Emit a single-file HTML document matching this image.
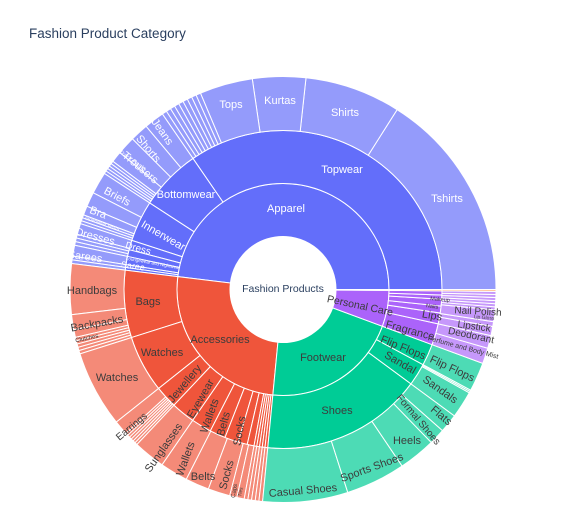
<!DOCTYPE html>
<html><head><meta charset="utf-8"><style>
html,body{margin:0;padding:0;background:#fff;width:564px;height:516px;overflow:hidden}
svg{display:block}
text{font-family:"Liberation Sans",sans-serif}
</style></head><body>
<svg id="s" width="564" height="516" xmlns="http://www.w3.org/2000/svg">
<text x="29" y="38" font-size="13.5" fill="#2a3f5f">Fashion Product Category</text>
</svg>
<script>
var cx=283,cy=289.5,R=[53,106,159,213];
var S=document.getElementById('s'),NS='http://www.w3.org/2000/svg';
function P(r,a){a=a*Math.PI/180;return [cx+r*Math.cos(a),cy-r*Math.sin(a)];}
function arc(l,a0,a1,col){
 var r0=R[l-1],r1=R[l];var p1=P(r1,a0),p2=P(r1,a1),p3=P(r0,a1),p4=P(r0,a0);
 var lg=(a1-a0)>180?1:0;
 var d='M'+p1+' A'+r1+' '+r1+' 0 '+lg+' 0 '+p2+' L'+p3+' A'+r0+' '+r0+' 0 '+lg+' 1 '+p4+'Z';
 var e=document.createElementNS(NS,'path');e.setAttribute('d',d);e.setAttribute('fill',col);
 e.setAttribute('stroke','#fff');e.setAttribute('stroke-width','1');S.appendChild(e);}
function many(l,a0,a1,n,col){var s=(a1-a0)/n;for(var i=0;i<n;i++)arc(l,a0+i*s,a0+(i+1)*s,col);}
var B1='#636efa',B2='#949bfb',R1='#ef553b',R2='#f48a78',G1='#00cc96',G2='#4ddbb5',P1='#ab63fa',P2='#c698fb',O1='#ffa15a',O2='#ffbd8c';
// level1
arc(1,0,173,B1);arc(1,173,264.5,R1);arc(1,264.5,339.7,G1);arc(1,339.7,359.5,P1);arc(1,359.5,360,O1);
// level2
arc(2,0,124.5,B1);arc(2,124.5,147,B1);arc(2,147,162,B1);arc(2,162,165.5,B1);arc(2,165.5,168,B1);arc(2,168,171,B1);many(2,171,173,2,B1);
arc(2,173,197.6,R1);arc(2,197.6,218.5,R1);arc(2,218.5,226.7,R1);arc(2,226.7,235.4,R1);arc(2,235.4,242.8,R1);arc(2,242.8,248.6,R1);arc(2,248.6,253.6,R1);arc(2,253.6,257,R1);arc(2,257,259.5,R1);many(2,259.5,264.5,5,R1);
arc(2,264.5,323.6,G1);arc(2,323.6,331.8,G1);arc(2,331.8,339.7,G1);
arc(2,339.7,347.5,P1);arc(2,347.5,351.5,P1);arc(2,351.5,354,P1);arc(2,354,356.5,P1);many(2,356.5,359.5,2,P1);arc(2,359.5,360,O1);
// level3
arc(3,0,57.6,B2);arc(3,57.6,83.8,B2);arc(3,83.8,98.3,B2);arc(3,98.3,112.8,B2);many(3,112.8,124.5,9,B2);
arc(3,124.5,130,B2);arc(3,130,135,B2);arc(3,135,140,B2);arc(3,140,143,B2);many(3,143,147,5,B2);
arc(3,147,153,B2);arc(3,153,157,B2);arc(3,157,159.5,B2);many(3,159.5,162,3,B2);
arc(3,162,165,B2);many(3,165,168,3,B2);arc(3,168,171,B2);many(3,171,173,2,B2);
arc(3,173,186.8,R2);arc(3,186.8,190.9,R2);arc(3,190.9,193,R2);many(3,193,197.6,5,R2);
arc(3,197.6,218.5,R2);arc(3,218.5,222.5,R2);many(3,222.5,226.7,6,R2);
arc(3,226.7,235.4,R2);arc(3,235.4,243,R2);arc(3,243,249.5,R2);arc(3,249.5,255.5,R2);arc(3,255.5,257.5,R2);arc(3,257.5,259.5,R2);many(3,259.5,264.5,5,R2);
arc(3,264.5,287.7,G2);arc(3,287.7,304,G2);arc(3,304,314.1,G2);arc(3,314.1,318.5,G2);arc(3,318.5,323.6,G2);arc(3,323.6,331,G2);many(3,331,331.8,2,G2);arc(3,331.8,339.7,G2);
arc(3,339.7,344,P2);arc(3,344,347.5,P2);arc(3,347.5,350,P2);arc(3,350,351.3,P2);arc(3,351.3,354.5,P2);many(3,354.5,359.5,6,P2);arc(3,359.5,360,O2);
// labels
var W='#fff',D='#3c3c3c';
var L=[
['Fashion Products',283,289,0,10.5,'#2a3f5f'],
['Apparel',286,209,0,11,W],['Topwear',342,170,0,11,W],['Tshirts',447,199,0,11,W],['Shirts',345,113,0,11,W],['Kurtas',280,101,0,11,W],['Tops',231,105,0,11,W],
['Bottomwear',186,195,0,11,W],['Innerwear',163,236,30,11,W],['Dress',138,249,15,10,W],['Loungewear and Nightwear',153,263,10,4.5,W],['Saree',133,266,8,9,W],
['Jeans',162,132,55,11,W],['Shorts',148,149,50,11,W],['Trousers',140,168,40,11,W],['Track Pants',132,161,35,6,W],
['Briefs',117,197,28,11,W],['Bra',98,213,20,11,W],['Innerwear Vests',102,224,18,5,W],['Dresses',95,237,15,11,W],['Sarees',85,257,8,11,W],
['Handbags',92,291,0,11,D],['Backpacks',97,324,-10,11,D],['Clutches',87,339,-12,6,D],['Bags',148,302,0,11,D],['Accessories',220,340,0,11,D],
['Watches',162,353,0,11,D],['Watches',117,378,0,11,D],['Jewellery',185,384,-50,11,D],['Eyewear',201,399,-60,11,D],['Wallets',210,416,-70,11,D],
['Belts',224,424,-75,11,D],['Socks',240,431,-80,11,D],['Earrings',132,427,-40,10,D],['Sunglasses',164,448,-55,11,D],['Wallets',186,459,-70,11,D],
['Belts',203,477,0,11,D],['Socks',227,475,-75,11,D],['Caps',235,491,-80,6,D],['Ties',241,492,-80,5,D],
['Footwear',323,358,0,11,D],['Shoes',337,411,0,11,D],['Casual Shoes',303,491,-5,11,D],['Sports Shoes',372,468,-20,11,D],['Heels',407,441,0,11,D],
['Formal Shoes',418,420,50,10,D],['Flats',441,416,40,11,D],['Sandals',440,390,35,11,D],['Flip Flops',452,369,25,11,D],['Sandal',400,363,30,11,D],['Flip Flops',403,348,22,11,D],
['Personal Care',360,306,12,10.5,D],['Fragrance',410,331,15,11,D],['Lips',432,316,10,11,D],['Nails',432,307,8,5.5,D],['Makeup',440,300,5,5.5,D],
['Perfume and Body Mist',463,348,15,7,D],['Deodorant',471,336,12,10,D],['Lipstick',474,327,8,10,D],['Lip Gloss',484,318,5,5,D],['Nail Polish',478,312,3,10,D]
];
L.forEach(function(t){var e=document.createElementNS(NS,'text');e.textContent=t[0];
e.setAttribute('x',0);e.setAttribute('y',0);e.setAttribute('font-size',t[4]);e.setAttribute('fill',t[5]);
e.setAttribute('text-anchor','middle');e.setAttribute('dominant-baseline','central');
e.setAttribute('transform','translate('+t[1]+','+t[2]+') rotate('+t[3]+')');S.appendChild(e);});
</script>
</body></html>
